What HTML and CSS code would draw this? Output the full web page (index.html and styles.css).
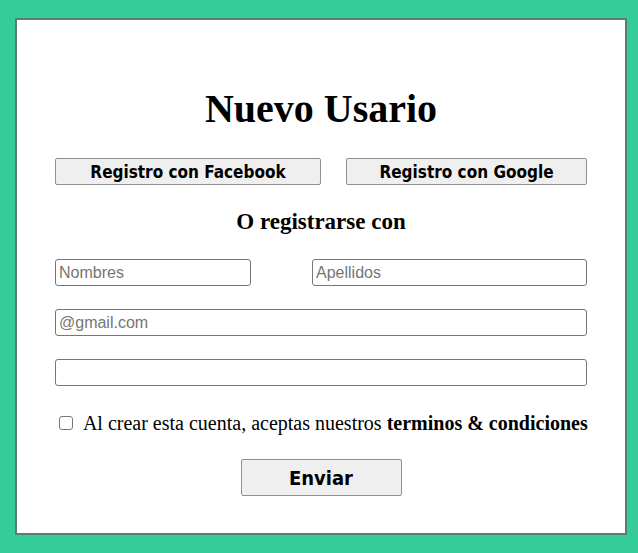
FILE: index.html
```html
<!DOCTYPE html>
<html lang="es">
<head>
<meta charset="utf-8">
<link rel="stylesheet" href="styles.css">
</head>
<body>
<form class="card">
  <h1 class="title">Nuevo Usario</h1>
  <div class="social">
    <button type="button" class="btn btn-fb">Registro con Facebook</button>
    <button type="button" class="btn btn-google">Registro con Google</button>
  </div>
  <h2 class="subtitle">O registrarse con</h2>
  <div class="row names">
    <input class="field field-name" type="text" placeholder="Nombres">
    <input class="field field-last" type="text" placeholder="Apellidos">
  </div>
  <div class="row">
    <input class="field field-full" type="email" placeholder="@gmail.com">
  </div>
  <div class="row">
    <input class="field field-full" type="password">
  </div>
  <label class="terms"><input type="checkbox" class="check"> Al crear esta cuenta, aceptas nuestros <b>terminos &amp; condiciones</b></label>
  <div class="submit-row">
    <button type="submit" class="btn btn-send">Enviar</button>
  </div>
</form>
</body>
</html>
```
FILE: styles.css
```css
html, body {
  margin: 0;
  padding: 0;
  background: #34cc98;
}
body {
  padding: 18px 11px 18px 15px;
}
.card {
  box-sizing: border-box;
  height: 517px;
  background: #fff;
  border: 2px solid #5a7d70;
  padding: 0 38px;
  display: flex;
  flex-direction: column;
  font-family: "Liberation Serif", serif;
}
.title {
  margin: 66px 0 0;
  font-size: 40px;
  line-height: 46px;
  text-align: center;
  font-weight: bold;
}
.social {
  display: flex;
  justify-content: space-between;
  margin-top: 26px;
}
.btn {
  font-family: "DejaVu Sans Condensed", "DejaVu Sans", sans-serif;
  font-stretch: condensed;
  font-weight: bold;
  background: #efefef;
  border: 1px solid #8f8f8f;
  border-radius: 2px;
  color: #000;
  padding: 0;
}
.btn-fb { width: 266px; height: 27px; font-size: 17px; }
.btn-google { width: 241px; height: 27px; font-size: 17px; }
.subtitle {
  margin: 24px 0 0;
  font-size: 23px;
  line-height: 26px;
  text-align: center;
  font-weight: bold;
}
.row {
  display: flex;
  margin-top: 23px;
}
.names {
  justify-content: space-between;
  margin-top: 24px;
}
.field {
  box-sizing: border-box;
  height: 27px;
  border: 1px solid #767676;
  border-radius: 3px;
  padding: 0 3px;
  font-family: "Liberation Sans", sans-serif;
  font-size: 16px;
  color: #000;
}
.field::placeholder { color: #757575; }
.field-name { width: 196px; }
.field-last { width: 275px; }
.field-full { width: 100%; }
.terms {
  margin-top: 25px;
  font-size: 20px;
  line-height: 24px;
  display: flex;
  align-items: center;
  white-space: pre;
  padding-left: 4px;
}
.check {
  appearance: none;
  -webkit-appearance: none;
  flex: 0 0 14px;
  box-sizing: border-box;
  margin: 0 6px 0 0;
  width: 14px;
  height: 14px;
  border: 1px solid #767676;
  border-radius: 3px;
  background: #fff;
}
.submit-row {
  display: flex;
  justify-content: center;
  margin-top: 24px;
}
.btn-send {
  width: 161px;
  height: 37px;
  font-size: 20px;
}
```
